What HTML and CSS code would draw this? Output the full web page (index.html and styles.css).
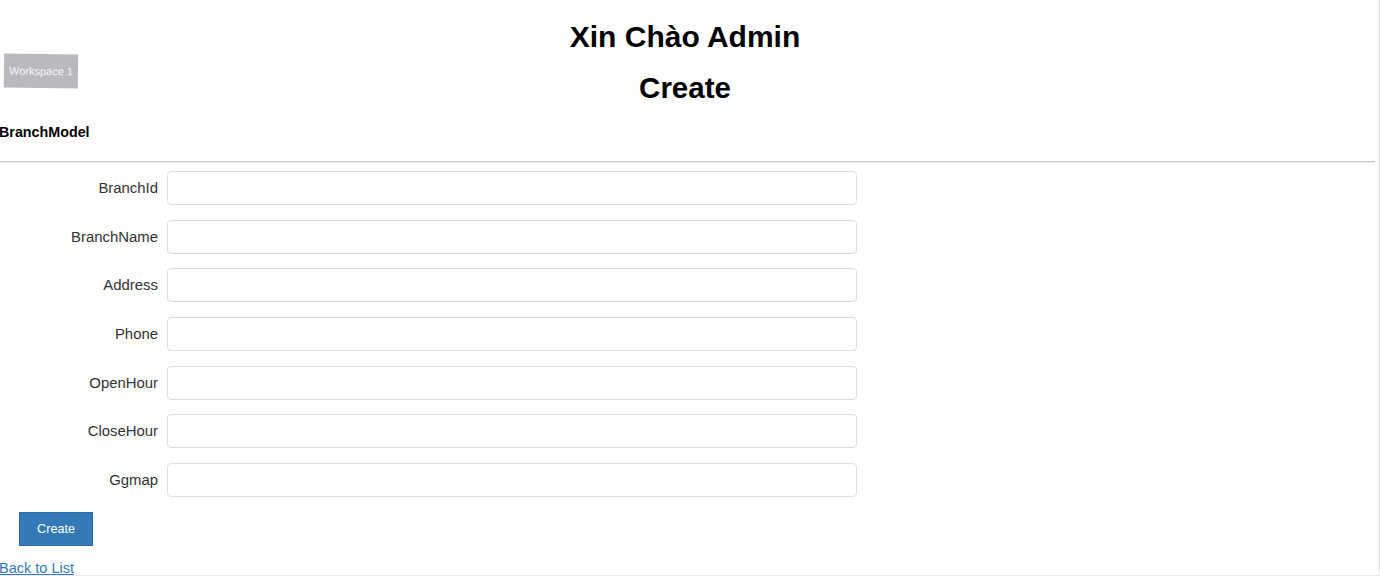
FILE: index.html
```html
<!DOCTYPE html>
<html lang="vi">
<head>
<meta charset="utf-8">
<title>Create</title>
<link rel="stylesheet" href="styles.css">
</head>
<body>
<div class="page">
  <div class="badge">Workspace 1</div>
  <h1 class="greet">Xin Chào Admin</h1>
  <h1 class="title">Create</h1>
  <h4 class="model">BranchModel</h4>
  <hr class="rule">
  <form class="form">
    <div class="row"><label class="label">BranchId</label><input class="field" type="text"></div>
    <div class="row"><label class="label">BranchName</label><input class="field" type="text"></div>
    <div class="row"><label class="label">Address</label><input class="field" type="text"></div>
    <div class="row"><label class="label">Phone</label><input class="field" type="text"></div>
    <div class="row"><label class="label">OpenHour</label><input class="field" type="text"></div>
    <div class="row"><label class="label">CloseHour</label><input class="field" type="text"></div>
    <div class="row"><label class="label">Ggmap</label><input class="field" type="text"></div>
    <div class="actions"><button class="btn" type="button">Create</button></div>
  </form>
  <a class="back" href="#">Back to List</a>
</div>
<div class="edge-right"></div>
<div class="edge-bottom"></div>
</body>
</html>
```

FILE: styles.css
```css
html, body {
  margin: 0;
  padding: 0;
  background: #ffffff;
  overflow: hidden;
}
body {
  font-family: "Liberation Sans", Arial, sans-serif;
  color: #333333;
  height: 577px;
}
.page {
  position: relative;
  margin-left: -5px;
  width: 1380px;
}
.badge {
  position: absolute;
  left: 9px;
  top: 54px;
  width: 74px;
  height: 34px;
  background: #bab9be;
  color: #f6f6f8;
  font-size: 11px;
  line-height: 34px;
  text-align: center;
  transform: rotate(0.8deg);
}
.greet, .title {
  margin: 0;
  text-align: center;
  font-weight: bold;
  color: #000000;
  line-height: 32px;
}
.greet {
  font-size: 30px;
  padding-top: 21px;
}
.title {
  font-size: 29.5px;
  margin-top: 19px;
}
.model {
  margin: 18px 0 0 0;
  font-size: 14.3px;
  line-height: 20px;
  font-weight: bold;
  color: #000000;
  padding-left: 4px;
}
.rule {
  margin: 19px 0 0 0;
  height: 0;
  border: 0;
  border-top: 1px solid #c6c6c6;
  border-bottom: 1px solid #e8e8e8;
}
.form {
  margin-top: 8px;
  display: flex;
  flex-direction: column;
  gap: 14.67px;
}
.row {
  display: grid;
  grid-template-columns: 163px 690px;
  column-gap: 9px;
  align-items: center;
}
.label {
  text-align: right;
  font-size: 14.9px;
  color: #333333;
}
.field {
  box-sizing: border-box;
  height: 34px;
  width: 690px;
  margin: 0;
  border: 1px solid #dedede;
  border-radius: 4px;
  background: #ffffff;
  font: inherit;
}
.actions {
  padding-left: 24px;
}
.btn {
  box-sizing: border-box;
  width: 74px;
  height: 34px;
  background: #337ab7;
  border: 1px solid #2e6da4;
  border-radius: 0;
  color: #ffffff;
  font-family: "Liberation Sans", Arial, sans-serif;
  font-size: 12.6px;
  padding: 0;
}
.back {
  display: inline-block;
  margin-top: 12px;
  padding-left: 4px;
  font-size: 14.5px;
  line-height: 20px;
  color: #337ab7;
  text-decoration: underline;
}
.edge-right {
  position: fixed;
  top: 0;
  right: 0;
  width: 1px;
  height: 572px;
  background: #dcdcdc;
}
.edge-bottom {
  position: fixed;
  left: 0;
  bottom: 1px;
  width: 1380px;
  height: 1px;
  background: #f1e6e8;
}
```
